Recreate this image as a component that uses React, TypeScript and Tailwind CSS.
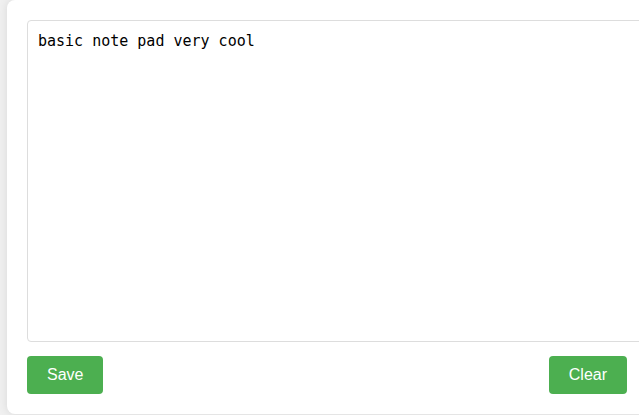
import React, { useState } from "react";

const buttonClass =
  "cursor-pointer rounded bg-[#4caf50] px-5 py-2 text-base leading-[22px] text-white hover:bg-[#45a049]";

const App: React.FC = () => {
  const [note, setNote] = useState<string>("basic note pad very cool");

  const handleSave = () => {
    localStorage.setItem("note", note);
  };

  const handleClear = () => {
    setNote("");
    localStorage.removeItem("note");
  };

  return (
    <div className="min-h-screen overflow-hidden bg-[#f0f0f0] pl-[7px] font-['Liberation_Sans',Arial,sans-serif]">
      <main className="-mr-2 rounded-lg bg-white p-5 shadow-[0_0_10px_rgba(0,0,0,0.1)]">
        {/* Padding sits outside the width, so the box runs past the card's inner edge */}
        <textarea
          aria-label="Note"
          spellCheck={false}
          value={note}
          onChange={(e) => setNote(e.target.value)}
          className="box-content block h-[300px] w-full resize-none rounded border border-[#dddddd] bg-white p-2.5 font-['DejaVu_Sans_Mono',monospace] text-[15px] leading-5 text-black outline-none"
        />

        <div className="mt-3.5 flex justify-between">
          <button type="button" onClick={handleSave} className={buttonClass}>
            Save
          </button>
          <button type="button" onClick={handleClear} className={buttonClass}>
            Clear
          </button>
        </div>
      </main>
    </div>
  );
};

export default App;
